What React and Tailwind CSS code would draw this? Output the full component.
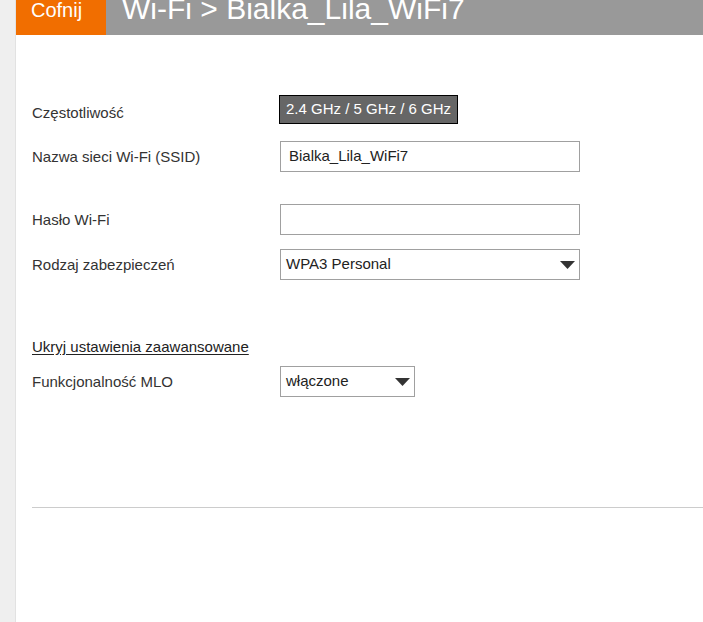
import React from 'react';

const font = { fontFamily: '"Liberation Sans", Arial, sans-serif' };

const Arrow = () => (
  <svg width="15" height="8" viewBox="0 0 15 8" className="absolute right-[4px] top-1/2 -translate-y-1/2">
    <polygon points="0,0 15,0 7.5,8" fill="#333333" />
  </svg>
);

const Row = ({ label, children, className = '', labelClass = '' }) => (
  <div className={`flex items-center ${className}`}>
    <div className={`w-[248px] shrink-0 text-[15px] leading-[17px] text-[#333333] ${labelClass}`}>{label}</div>
    {children}
  </div>
);

const Select = ({ value, width }) => (
  <div className={`relative h-[31px] ${width} border border-[#a0a0a0] bg-white flex items-center pl-[5px] text-[15px] text-[#222222]`}>
    {value}
    <Arrow />
  </div>
);

export default function App() {
  return (
    <div className="flex min-h-[622px] bg-white" style={font}>
      <div className="w-[16px] shrink-0 bg-[#efefef] border-r border-[#e2e2e2]" />
      <div className="flex-1 flex flex-col">
        {/* header */}
        <div className="flex h-[35px] overflow-hidden">
          <div className="w-[90px] bg-[#f16e00] pl-[15px] text-white text-[20px] leading-[20px]">Cofnij</div>
          <div className="flex-1 bg-[#999999] pl-[16px] text-white text-[30px] leading-[17px] whitespace-nowrap">
            Wi-Fi &gt; Bialka_Lila_WiFi7
          </div>
        </div>

        <div className="pl-[16px] flex flex-col">
          <Row label="Częstotliwość" className="mt-[60px] h-[29px]" labelClass="pt-[5px]">
            <div className="h-[29px] flex items-center px-[6px] bg-[#666666] border border-black text-white text-[15px] -ml-[1px]">
              2.4 GHz / 5 GHz / 6 GHz
            </div>
          </Row>

          <Row label="Nazwa sieci Wi-Fi (SSID)" className="mt-[17px] h-[31px]">
            <div className="h-[31px] w-[300px] border border-[#a0a0a0] flex items-center pl-[8px] text-[15px] text-[#222222]">
              Bialka_Lila_WiFi7
            </div>
          </Row>

          <Row label="Hasło Wi-Fi" className="mt-[32px] h-[31px]">
            <div className="h-[31px] w-[300px] border border-[#a0a0a0]" />
          </Row>

          <Row label="Rodzaj zabezpieczeń" className="mt-[14px] h-[31px]">
            <Select value="WPA3 Personal" width="w-[300px]" />
          </Row>

          <div className="mt-[58px] text-[15px] leading-[17px] text-[#222222] underline underline-offset-2">
            Ukryj ustawienia zaawansowane
          </div>

          <Row label="Funkcjonalność MLO" className="mt-[11px] h-[31px]">
            <Select value="włączone" width="w-[135px]" />
          </Row>

          <div className="mt-[110px] h-px bg-[#cccccc]" />
        </div>
      </div>
    </div>
  );
}
